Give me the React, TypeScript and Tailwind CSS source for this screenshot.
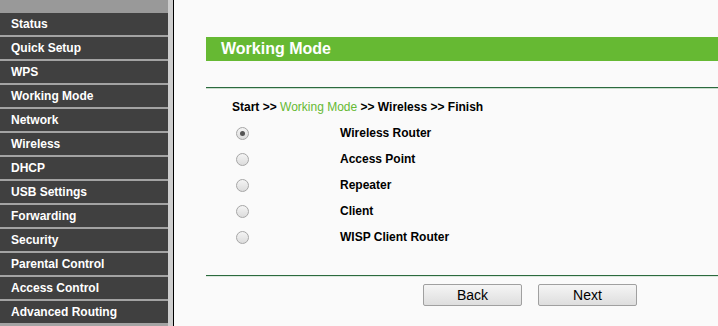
import { useState } from 'react';

const menu = [
  'Status',
  'Quick Setup',
  'WPS',
  'Working Mode',
  'Network',
  'Wireless',
  'DHCP',
  'USB Settings',
  'Forwarding',
  'Security',
  'Parental Control',
  'Access Control',
  'Advanced Routing',
];

const modes = ['Wireless Router', 'Access Point', 'Repeater', 'Client', 'WISP Client Router'];

function Radio({ checked }: { checked: boolean }) {
  return (
    <span className="flex h-[13px] w-[13px] items-center justify-center rounded-full border border-[#a6a6a6] bg-gradient-to-b from-[#f4f4f4] to-[#dcdcdc]">
      {checked && <span className="h-[5px] w-[5px] rounded-full bg-[#555]" />}
    </span>
  );
}

export default function App() {
  const [mode, setMode] = useState(0);

  return (
    <div className="flex h-[326px] w-[718px] overflow-hidden bg-[#fafafa] font-['Liberation_Sans',Arial,sans-serif]">
      {/* Sidebar */}
      <div className="flex w-[168px] shrink-0 flex-col bg-[#a3a3a3]">
        <div className="h-[13px] bg-[#999999]" />
        {menu.map((item) => (
          <div
            key={item}
            className="mb-[2px] flex h-[22px] items-center bg-[#404040] pl-[11px] text-[12px] font-bold text-white"
          >
            {item}
          </div>
        ))}
      </div>
      <div className="w-[5px] shrink-0 bg-[#cdcdcd]" />
      <div className="w-[1px] shrink-0 bg-black" />

      {/* Main */}
      <div className="flex flex-1 flex-col pl-[32px] pt-[37px]">
        <div className="flex h-[24px] items-center bg-[#66b933] pl-[15px] text-[16px] font-bold text-white">
          Working Mode
        </div>

        <div className="mt-[26px] h-[1px] bg-[#2b6a3e]" />
        <div className="h-[1px] bg-[#c9dccd]" />

        <div className="ml-[26px] mt-[10px] h-[16px] text-[12px] leading-[16px] text-black">
          <span className="font-bold">Start &gt;&gt; </span>
          <span className="text-[#66b933]">Working Mode</span>
          <span className="font-bold"> &gt;&gt; Wireless &gt;&gt; Finish</span>
        </div>

        <div className="mt-[5px] flex flex-col">
          {modes.map((m, i) => (
            <label key={m} className="flex h-[26px] cursor-pointer items-center" onClick={() => setMode(i)}>
              <span className="ml-[30px] w-[104px]">
                <Radio checked={mode === i} />
              </span>
              <span className="-mt-[1px] text-[12px] font-bold text-black">{m}</span>
            </label>
          ))}
        </div>

        <div className="mt-[25px] h-[1px] bg-[#2b6a3e]" />
        <div className="h-[1px] bg-[#dde8df]" />

        <div className="ml-[217px] mt-[7px] flex gap-[16px]">
          <button className="h-[22px] w-[99px] rounded-[2px] border border-[#a0a0a0] bg-gradient-to-b from-[#f5f5f5] to-[#dedede] text-[14px] text-black">
            Back
          </button>
          <button className="h-[22px] w-[99px] rounded-[2px] border border-[#a0a0a0] bg-gradient-to-b from-[#f5f5f5] to-[#dedede] text-[14px] text-black">
            Next
          </button>
        </div>
      </div>
    </div>
  );
}
